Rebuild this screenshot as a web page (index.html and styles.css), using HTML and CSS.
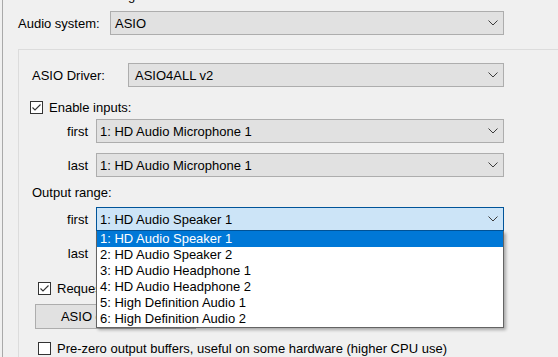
FILE: index.html
```html
<!DOCTYPE html>
<html lang="en">
<head>
  <meta charset="UTF-8" />
  <title>Audio settings</title>
  <link rel="stylesheet" href="styles.css">
</head>
<body>
  <div class="panel">
    <div class="cut-title"><span>Audio settings</span></div>

    <div class="field system-row">
      <span class="field-label system-label">Audio system:</span>
      <div class="combo combo-system">
        <span>ASIO</span>
        <svg class="chevron" width="10" height="6" viewBox="0 0 10 6"><polyline points="0.5,0.5 5,5 9.5,0.5" /></svg>
      </div>
    </div>

    <div class="group">
      <div class="field driver-row">
        <span class="field-label driver-label">ASIO Driver:</span>
        <div class="combo combo-driver">
          <span>ASIO4ALL v2</span>
          <svg class="chevron" width="10" height="6" viewBox="0 0 10 6"><polyline points="0.5,0.5 5,5 9.5,0.5" /></svg>
        </div>
      </div>

      <label class="check check-enable">
        <span class="box"><svg width="11" height="11" viewBox="0 0 11 11"><polyline points="1.5,5.5 4,8 9.5,2.5" /></svg></span>
        Enable inputs:
      </label>

      <div class="field range-row first-in">
        <span class="range-label">first</span>
        <div class="combo combo-range">
          <span>1: HD Audio Microphone 1</span>
          <svg class="chevron" width="10" height="6" viewBox="0 0 10 6"><polyline points="0.5,0.5 5,5 9.5,0.5" /></svg>
        </div>
      </div>
      <div class="field range-row last-in">
        <span class="range-label">last</span>
        <div class="combo combo-range">
          <span>1: HD Audio Microphone 1</span>
          <svg class="chevron" width="10" height="6" viewBox="0 0 10 6"><polyline points="0.5,0.5 5,5 9.5,0.5" /></svg>
        </div>
      </div>

      <div class="section-label">Output range:</div>

      <div class="field range-row first-out">
        <span class="range-label">first</span>
        <div class="combo combo-range focused">
          <span>1: HD Audio Speaker 1</span>
          <svg class="chevron" width="10" height="6" viewBox="0 0 10 6"><polyline points="0.5,0.5 5,5 9.5,0.5" /></svg>
          <ul class="dropdown">
            <li class="selected">1: HD Audio Speaker 1</li>
            <li>2: HD Audio Speaker 2</li>
            <li>3: HD Audio Headphone 1</li>
            <li>4: HD Audio Headphone 2</li>
            <li>5: High Definition Audio 1</li>
            <li>6: High Definition Audio 2</li>
          </ul>
        </div>
      </div>
      <div class="field range-row last-out">
        <span class="range-label">last</span>
        <div class="combo combo-range">
          <span>1: HD Audio Speaker 1</span>
          <svg class="chevron" width="10" height="6" viewBox="0 0 10 6"><polyline points="0.5,0.5 5,5 9.5,0.5" /></svg>
        </div>
      </div>

      <label class="check check-request">
        <span class="box"><svg width="11" height="11" viewBox="0 0 11 11"><polyline points="1.5,5.5 4,8 9.5,2.5" /></svg></span>
        Request buffered mode
      </label>

      <button class="panel-button">ASIO control panel</button>

      <label class="check check-prezero">
        <span class="box"></span>
        Pre-zero output buffers, useful on some hardware (higher CPU use)
      </label>
    </div>
  </div>
</body>
</html>
```

FILE: styles.css
```css
body {
  margin: 0;
  background: #f0f0f0;
  color: #000;
  font-family: "Liberation Sans", Arial, sans-serif;
  font-size: 13px;
  line-height: 15px;
  overflow: hidden;
}

.panel {
  margin-left: 2px;
  border-left: 1px solid #a9a9a9;
  padding-left: 15px;
  height: 400px;
}

/* caption of the outer box, scrolled out of view */
.cut-title {
  height: 3px;
  overflow: hidden;
}

.cut-title span {
  display: block;
  margin-top: -12px;
  margin-left: 42px;
}

.field {
  display: flex;
  align-items: center;
}

.system-row {
  margin-top: 8px;
}

.system-label {
  width: 92px;
}

.combo {
  position: relative;
  display: flex;
  align-items: center;
  justify-content: space-between;
  box-sizing: border-box;
  height: 24px;
  border: 1px solid #adadad;
  background: #e1e1e1;
  padding: 0 5px 0 4px;
  white-space: nowrap;
}

.combo-system {
  width: 394px;
}

.chevron polyline {
  fill: none;
  stroke: #3c3c3c;
  stroke-width: 1;
}

.group {
  margin-top: 14px;
  width: 560px;
  height: 340px;
  border: 1px solid #dcdcdc;
  padding: 13px 0 0 13px;
}

.driver-label {
  width: 96px;
}

.combo-driver {
  width: 376px;
  padding-left: 6px;
}

.check {
  display: flex;
  align-items: center;
  height: 15px;
  gap: 6px;
  white-space: nowrap;
}

.box {
  display: flex;
  align-items: center;
  justify-content: center;
  box-sizing: border-box;
  width: 13px;
  height: 13px;
  border: 1px solid #333;
  background: #fff;
}

.box polyline {
  fill: none;
  stroke: #333;
  stroke-width: 1.1;
}

.check-enable {
  margin-top: 13px;
  margin-left: -2px;
}

.range-label {
  width: 56px;
  margin-right: 8px;
  text-align: right;
}

.combo-range {
  width: 408px;
  padding-left: 3px;
}

.first-in {
  margin-top: 4px;
}

.last-in,
.last-out {
  margin-top: 10px;
}

.section-label {
  margin-top: 8px;
}

.first-out {
  margin-top: 7px;
}

.combo.focused {
  background: #cce4f7;
  border-color: #005499;
}

.dropdown {
  position: absolute;
  top: calc(100% + 1px);
  left: -1px;
  right: -1px;
  z-index: 10;
  margin: 0;
  padding: 0;
  list-style: none;
  background: #fff;
  border: 1px solid #646464;
  border-top: none;
  box-shadow: 2px 2px 3px rgba(0, 0, 0, 0.3);
}

.dropdown li {
  height: 16px;
  line-height: 16px;
  padding-left: 3px;
}

.dropdown li.selected {
  background: #0078d7;
  color: #fff;
}

.check-request {
  margin-top: 16px;
  margin-left: 6px;
}

.panel-button {
  display: block;
  margin: 8px 0 0 3px;
  width: 161px;
  height: 25px;
  border: 1px solid #adadad;
  background: #e1e1e1;
  font-family: inherit;
  font-size: 13px;
  color: #000;
  padding: 0;
}

.check-prezero {
  margin-top: 12px;
  margin-left: 6px;
}
```
